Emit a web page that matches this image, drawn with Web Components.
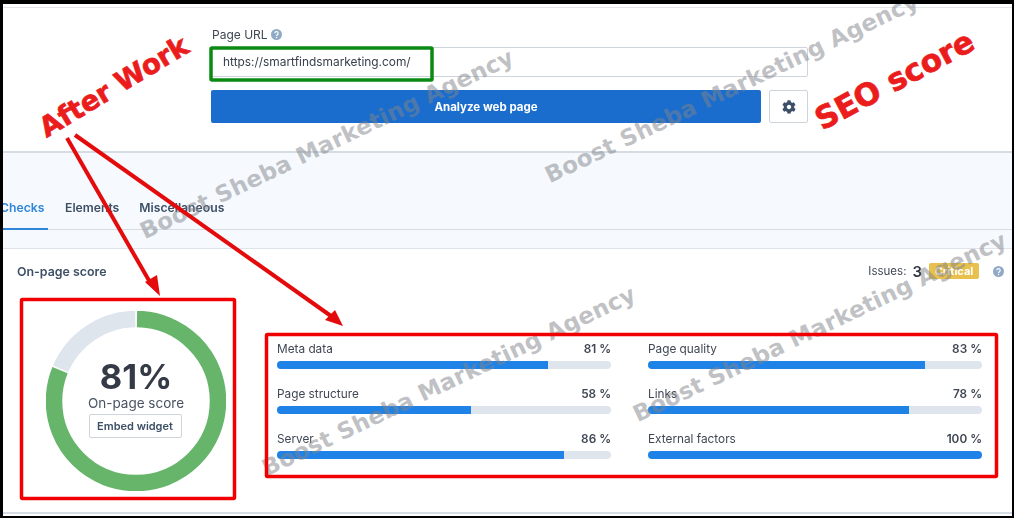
<!DOCTYPE html>
<html lang="en">
<head>
<meta charset="utf-8">
<title>SEO score</title>
<style>
  html, body { margin: 0; height: 100%; background: #000; }
  body { font-family: Inter, "Liberation Sans", sans-serif; color: #3b4350; overflow: hidden; }
</style>
</head>
<body>
<seo-page>
  <seo-form url="https://smartfindsmarketing.com/"></seo-form>
  <seo-tabs active="Checks" items="Checks,Elements,Miscellaneous"></seo-tabs>
  <seo-card>
    <seo-donut slot="donut" value="81"></seo-donut>
    <seo-metric label="Meta data" value="81"></seo-metric>
    <seo-metric label="Page quality" value="83"></seo-metric>
    <seo-metric label="Page structure" value="58"></seo-metric>
    <seo-metric label="Links" value="78"></seo-metric>
    <seo-metric label="Server" value="86"></seo-metric>
    <seo-metric label="External factors" value="100"></seo-metric>
  </seo-card>
  <seo-annotations slot="overlay"></seo-annotations>
</seo-page>
<script>
{
  const html = String.raw;

  const helpIcon = (size) => html`
    <svg width="${size}" height="${size}" viewBox="0 0 16 16" aria-hidden="true">
      <circle cx="8" cy="8" r="8" fill="#8fa9c6"/>
      <path d="M5.6 6.2a2.4 2.4 0 1 1 3.7 2c-.9.6-1.3 1-1.3 1.8" fill="none" stroke="#fff" stroke-width="1.7"/>
      <circle cx="8" cy="12.4" r="1.1" fill="#fff"/>
    </svg>`;

  class SeoPage extends HTMLElement {
    constructor() {
      super();
      this.attachShadow({ mode: "open" });
      this.shadowRoot.innerHTML = html`
        <style>
          :host {
            display: block;
            position: relative;
            width: 1009px;
            height: 512px;
            margin: 4px 2px 0 3px;
            background: #fff;
            overflow: hidden;
          }
          .screen {
            display: flex;
            flex-direction: column;
            height: 100%;
            filter: blur(0.3px);
          }
        </style>
        <div class="screen"><slot></slot></div>
        <slot name="overlay"></slot>
      `;
    }
  }

  class SeoForm extends HTMLElement {
    constructor() {
      super();
      this.attachShadow({ mode: "open" });
      this.shadowRoot.innerHTML = html`
        <style>
          :host {
            display: block;
            flex: none;
            box-sizing: border-box;
            height: 146px;
            margin-top: 3px;
            padding: 16px 0 0 208px;
            border-top: 1px solid #e3e7ec;
            border-bottom: 2px solid #d5dce4;
          }
          .label {
            display: flex;
            align-items: center;
            gap: 3px;
            height: 20px;
            margin-bottom: 3px;
            padding-left: 1px;
            font-size: 12px;
            color: #3f4754;
          }
          .url {
            box-sizing: border-box;
            width: 597px;
            height: 30px;
            padding-left: 11px;
            border: 1px solid #ced4dc;
            border-radius: 2px;
            font-size: 11.9px;
            line-height: 28px;
            color: #38404c;
          }
          .actions {
            display: flex;
            gap: 8px;
            margin-top: 13px;
          }
          .go {
            display: flex;
            align-items: center;
            justify-content: center;
            width: 550px;
            height: 33px;
            background: #1a6dcd;
            border-radius: 2px;
            color: #fff;
            font-size: 11.5px;
            font-weight: 700;
          }
          .gear {
            display: flex;
            align-items: center;
            justify-content: center;
            box-sizing: border-box;
            width: 39px;
            height: 33px;
            border: 1px solid #ced4dc;
            border-radius: 2px;
          }
        </style>
        <div class="label">Page URL ${helpIcon(11)}</div>
        <div class="url">${this.getAttribute("url")}</div>
        <div class="actions">
          <div class="go">Analyze web page</div>
          <div class="gear">
            <svg width="14" height="14" viewBox="0 0 512 512" aria-hidden="true">
              <path fill="#3d4f66" d="M487.4 315.7l-42.6-24.6c4.300-23.200 4.300-47 0-70.200l42.600-24.600c4.900-2.800 7.100-8.600 5.500-14-11.100-35.600-30-67.800-54.700-94.600-3.800-4.100-10-5.100-14.800-2.300L380.800 110c-17.900-15.400-38.500-27.300-60.800-35.100V25.800c0-5.600-3.900-10.500-9.400-11.700-36.700-8.200-74.300-7.800-109.200 0-5.500 1.200-9.400 6.100-9.400 11.700V75c-22.200 7.900-42.800 19.800-60.800 35.100L88.700 85.500c-4.900-2.800-11-1.900-14.800 2.300-24.700 26.700-43.600 58.900-54.700 94.600-1.700 5.400.6 11.200 5.500 14L67.300 221c-4.300 23.200-4.300 47 0 70.200l-42.600 24.600c-4.900 2.800-7.100 8.600-5.500 14 11.100 35.600 30 67.800 54.700 94.600 3.800 4.100 10 5.100 14.800 2.300l42.600-24.600c17.900 15.400 38.500 27.300 60.800 35.100v49.200c0 5.600 3.900 10.500 9.400 11.700 36.700 8.200 74.300 7.800 109.200 0 5.500-1.200 9.400-6.100 9.400-11.700v-49.200c22.200-7.900 42.800-19.800 60.800-35.100l42.600 24.600c4.900 2.800 11 1.900 14.800-2.300 24.700-26.700 43.600-58.900 54.700-94.600 1.500-5.500-.7-11.300-5.600-14.100zM256 336c-44.100 0-80-35.900-80-80s35.900-80 80-80 80 35.900 80 80-35.900 80-80 80z"/>
            </svg>
          </div>
        </div>
      `;
    }
  }

  class SeoTabs extends HTMLElement {
    constructor() {
      super();
      this.attachShadow({ mode: "open" });
      const active = this.getAttribute("active");
      const tabs = this.getAttribute("items").split(",").map((name) => html`
        <div class="tab ${name === active ? "on" : ""}">${name}</div>`).join("");
      this.shadowRoot.innerHTML = html`
        <style>
          :host {
            display: block;
            flex: none;
            box-sizing: border-box;
            height: 77px;
            background: #f6fafe;
            border-bottom: 1px solid #d5dce4;
          }
          .row {
            display: flex;
            gap: 20px;
            height: 100%;
            margin-left: -3px;
            font-size: 12.2px;
            font-weight: 600;
            color: #3d4f66;
          }
          .tab {
            box-sizing: border-box;
            height: 77px;
            padding-top: 47px;
            line-height: 15px;
          }
          .tab.on {
            color: #2f86d9;
            width: 48px;
            margin-right: -3px;
            border-bottom: 2px solid #2f86d9;
          }
        </style>
        <div class="row">${tabs}</div>
      `;
    }
  }

  class SeoCard extends HTMLElement {
    constructor() {
      super();
      this.attachShadow({ mode: "open" });
      this.shadowRoot.innerHTML = html`
        <style>
          :host {
            display: flex;
            flex-direction: column;
            flex: 1;
            min-height: 0;
          }
          .gap {
            flex: none;
            height: 18px;
            background: #f6fafe;
          }
          .panel {
            flex: 1;
            box-sizing: border-box;
            margin-bottom: 2px;
            padding: 14px 8px 0 14px;
            background: #fff;
            border-top: 1px solid #dfe4ea;
            border-bottom: 2px solid #d5dde6;
          }
          .head {
            display: flex;
            align-items: center;
            justify-content: space-between;
            height: 16px;
          }
          .title {
            font-size: 12.4px;
            font-weight: 600;
            color: #3d4f66;
          }
          .issues {
            display: flex;
            align-items: center;
            font-size: 11.5px;
            color: #3f4754;
          }
          .issues b {
            margin: 0 7px 0 6px;
            font-size: 15px;
            font-weight: 600;
            color: #2f3540;
          }
          .badge {
            width: 50px;
            height: 16px;
            margin-right: 14px;
            background: #e8c04e;
            border-radius: 2px;
            color: #fff;
            font-size: 11px;
            font-weight: 700;
            line-height: 16px;
            text-align: center;
          }
          .body {
            display: flex;
            margin-top: 32px;
          }
          .grid {
            display: grid;
            grid-template-columns: 334px 334px;
            grid-auto-rows: 45px;
            column-gap: 37px;
            margin: 30px 0 0 51px;
          }
        </style>
        <div class="gap"></div>
        <div class="panel">
          <div class="head">
            <div class="title">On-page score</div>
            <div class="issues">Issues: <b>3</b><span class="badge">Critical</span>${helpIcon(11)}</div>
          </div>
          <div class="body">
            <slot name="donut"></slot>
            <div class="grid"><slot></slot></div>
          </div>
        </div>
      `;
    }
  }

  class SeoDonut extends HTMLElement {
    constructor() {
      super();
      this.attachShadow({ mode: "open" });
      const value = Number(this.getAttribute("value"));
      const length = 2 * Math.PI * 82;
      const arc = (from, to) => `${(length * (to - from)) / 100} ${length}`;
      const offset = (from) => -(length * from) / 100;
      this.shadowRoot.innerHTML = html`
        <style>
          :host {
            display: block;
            flex: none;
            position: relative;
            width: 180px;
            height: 180px;
            margin-left: 29px;
          }
          svg {
            display: block;
          }
          .inner {
            position: absolute;
            inset: 0;
            display: flex;
            flex-direction: column;
            align-items: center;
            justify-content: center;
            padding-bottom: 5px;
            box-sizing: border-box;
          }
          .num {
            font-size: 34.5px;
            font-weight: 700;
            line-height: 36px;
            color: #353b46;
          }
          .cap {
            font-size: 13.5px;
            line-height: 16px;
            color: #4a5361;
          }
          .embed {
            box-sizing: border-box;
            width: 93px;
            height: 24px;
            margin: 3px 2px 0 0;
            border: 1px solid #ced4dc;
            border-radius: 2px;
            font-size: 11px;
            font-weight: 600;
            line-height: 22px;
            text-align: center;
            color: #3d4f66;
          }
        </style>
        <svg width="180" height="180" viewBox="0 0 180 180" aria-hidden="true">
          <g transform="rotate(-90 90 90)" fill="none" stroke-width="16.5">
            <circle cx="90" cy="90" r="82" stroke="#dfe5ed" stroke-dasharray="${arc(value + 0.3, 99.7)}" stroke-dashoffset="${offset(value + 0.3)}"/>
            <circle cx="90" cy="90" r="82" stroke="#66b56b" stroke-dasharray="${arc(0.2, value)}" stroke-dashoffset="${offset(0.2)}"/>
          </g>
        </svg>
        <div class="inner">
          <div class="num">${value}%</div>
          <div class="cap">On-page score</div>
          <div class="embed">Embed widget</div>
        </div>
      `;
    }
  }

  class SeoMetric extends HTMLElement {
    constructor() {
      super();
      this.attachShadow({ mode: "open" });
      const value = this.getAttribute("value");
      this.shadowRoot.innerHTML = html`
        <style>
          :host {
            display: block;
          }
          .line {
            display: flex;
            justify-content: space-between;
            height: 16px;
            margin-bottom: 4px;
            font-size: 11.8px;
            line-height: 16px;
            color: #3f4754;
          }
          .line b {
            font-weight: 600;
          }
          .track {
            height: 8px;
            background: #dfe5ed;
            border-radius: 4px;
            overflow: hidden;
          }
          .fill {
            height: 100%;
            background: #1f82e6;
          }
        </style>
        <div class="line"><span>${this.getAttribute("label")}</span><b>${value} %</b></div>
        <div class="track"><div class="fill" style="width: ${value}%"></div></div>
      `;
    }
  }

  // Everything pasted on top of the screenshot: frames, arrows, captions, watermark
  class SeoAnnotations extends HTMLElement {
    constructor() {
      super();
      this.attachShadow({ mode: "open" });
      const mark = (x, y) => html`
        <span class="mark" style="left: ${x}px; top: ${y}px">Boost Sheba Marketing Agency</span>`;
      this.shadowRoot.innerHTML = html`
        <style>
          :host {
            position: absolute;
            inset: 0;
            display: block;
            pointer-events: none;
          }
          svg {
            position: absolute;
            left: -3px;
            top: -4px;
          }
          span {
            position: absolute;
            white-space: nowrap;
            transform-origin: 0 100%;
          }
          .mark {
            font: bold 23px "DejaVu Sans", sans-serif;
            letter-spacing: 0.2px;
            line-height: 26px;
            color: rgba(128, 132, 138, 0.5);
            transform: rotate(-25.5deg);
          }
          .note {
            font: bold 27.5px "DejaVu Sans", sans-serif;
            line-height: 34px;
            color: #ea1c1c;
            -webkit-text-stroke: 0.7px #ea1c1c;
          }
        </style>
        ${mark(144, 214)}${mark(549, 158)}${mark(266, 451)}${mark(637, 397)}
        <span class="note" style="left: 47px; top: 106px; transform: rotate(-31deg)">After Work</span>
        <span class="note" style="left: 822px; top: 98px; transform: rotate(-28deg); font-size: 31px">SEO score</span>
        <svg width="1014" height="518" viewBox="0 0 1014 518" fill="none" aria-hidden="true">
          <rect x="211" y="48" width="221" height="32" rx="1" stroke="#0a8a12" stroke-width="3.500"/>
          <rect x="21.500" y="299.500" width="213" height="199" rx="1" stroke="#f00000" stroke-width="3.500"/>
          <rect x="266.500" y="334.500" width="730" height="142" rx="1" stroke="#f00000" stroke-width="3.500"/>
          <path d="M67 138L151 284" stroke="#e30b0b" stroke-width="4"/>
          <path d="M75 135L331 316" stroke="#e30b0b" stroke-width="4"/>
          <path d="M160 296L145 282L157 275Z" fill="#e30b0b"/>
          <path d="M343 326L325 320L335 310Z" fill="#e30b0b"/>
        </svg>
      `;
    }
  }

  customElements.define("seo-page", SeoPage);
  customElements.define("seo-form", SeoForm);
  customElements.define("seo-tabs", SeoTabs);
  customElements.define("seo-card", SeoCard);
  customElements.define("seo-donut", SeoDonut);
  customElements.define("seo-metric", SeoMetric);
  customElements.define("seo-annotations", SeoAnnotations);
}
</script>
</body>
</html>
